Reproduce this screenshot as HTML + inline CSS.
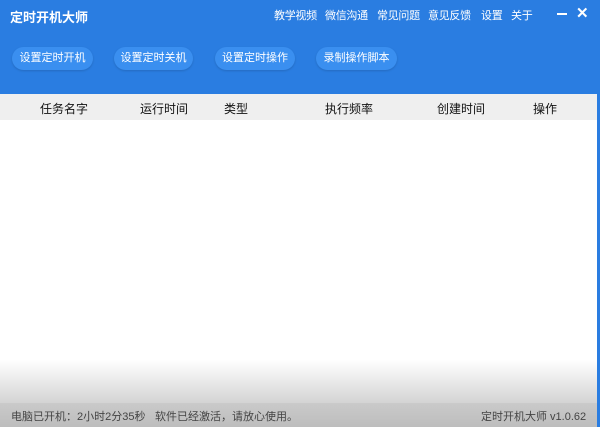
<!DOCTYPE html>
<html><head><meta charset="utf-8"><style>
body{margin:0;width:600px;height:427px;overflow:hidden;font-family:"Liberation Sans","Noto Sans CJK SC",sans-serif;background:#fff;position:relative}
.top{position:absolute;left:0;top:0;width:600px;height:94px;background:#2a7de1}
.title{position:absolute;left:10px;top:7px;color:#fff;font-weight:bold;font-size:13px}
.menu{position:absolute;top:7px;color:#fff;font-size:11px;letter-spacing:-0.3px}
.btn{position:absolute;top:47px;height:23px;line-height:23px;border-radius:12px;background:#3a8ff0;color:#fff;font-size:11px;text-align:center;box-shadow:0 1px 2px rgba(0,0,0,.15)}
.th{position:absolute;top:94px;left:0;width:597px;height:26px;background:#efefef}
.th span{position:absolute;top:6px;font-size:12px;color:#111}
.rb{position:absolute;right:0;top:0;width:3px;height:427px;background:#2a7de1}
.fade{position:absolute;left:0;top:360px;width:597px;height:43px;background:linear-gradient(#fff,#d4d4d4)}
.st{position:absolute;left:0;top:403px;width:597px;height:24px;background:linear-gradient(#cacaca,#bdbdbd);font-size:11px;color:#444}
.st span{position:absolute;top:5px}
</style></head><body>
<div class="top">
<div class="title">定时开机大师</div>
<div class="menu" style="left:274px">教学视频</div>
<div class="menu" style="left:325px">微信沟通</div>
<div class="menu" style="left:377px">常见问题</div>
<div class="menu" style="left:428px">意见反馈</div>
<div class="menu" style="left:481px">设置</div>
<div class="menu" style="left:511px">关于</div>
<div style="position:absolute;left:557px;top:13px;width:10px;height:2px;background:#fff"></div>
<div style="position:absolute;left:576px;top:4px;color:#fff;font-size:15px;font-weight:bold">✕</div>
<div class="btn" style="left:12px;width:81px">设置定时开机</div>
<div class="btn" style="left:114px;width:79px">设置定时关机</div>
<div class="btn" style="left:215px;width:80px">设置定时操作</div>
<div class="btn" style="left:316px;width:81px">录制操作脚本</div>
</div>
<div class="th">
<span style="left:40px">任务名字</span><span style="left:140px">运行时间</span><span style="left:224px">类型</span>
<span style="left:325px">执行频率</span><span style="left:437px">创建时间</span><span style="left:533px">操作</span>
</div>
<div class="fade"></div>
<div class="st"><span style="left:11px">电脑已开机：2小时2分35秒</span><span style="left:155px">软件已经激活，请放心使用。</span><span style="left:481px">定时开机大师 v1.0.62</span></div>
<div class="rb"></div>
</body></html>
